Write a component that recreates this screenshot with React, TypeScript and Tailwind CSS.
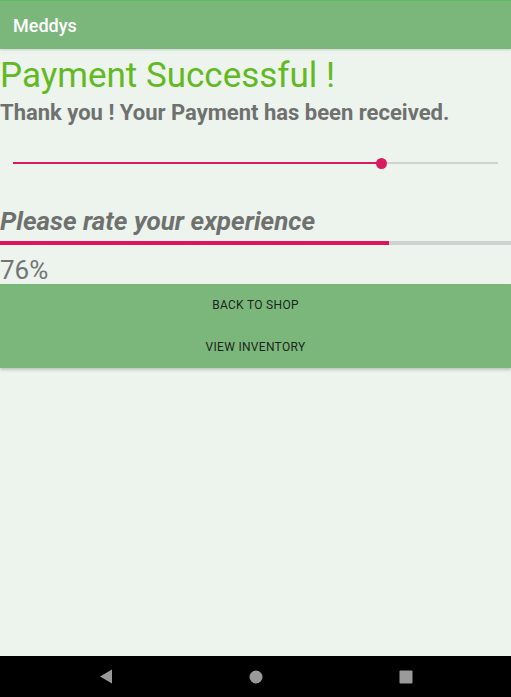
import React from "react";

export default function App() {
  return (
    <div
      className="w-[511px] h-[697px] flex flex-col bg-[#edf4ee] overflow-hidden"
      style={{ fontFamily: "Roboto, 'Liberation Sans', sans-serif" }}
    >
      <div className="h-[1px] bg-[#5cc160]" />
      <div className="h-[48px] bg-[#7bb77b] flex items-center px-[13px] shadow-[0_1px_2px_rgba(0,0,0,0.15)]">
        <span className="text-white text-[18px] font-medium leading-none mt-[1px]">Meddys</span>
      </div>
      <div className="flex-1 flex flex-col">
        <div className="text-[35px] leading-[41px] text-[#63b922] mt-[6px] whitespace-nowrap">Payment Successful !</div>
        <div className="text-[22px] leading-[26px] font-bold text-[#6f716f] mt-[4px] whitespace-nowrap">
          Thank you ! Your Payment has been received.
        </div>
        <div className="mt-[23px] px-[13px] h-[28px] flex items-center">
          <div className="relative w-full h-[2px] bg-[#cfd3cf]">
            <div className="absolute left-0 top-0 h-[2px] w-[368px] bg-[#d81b60]" />
            <div className="absolute left-[363px] top-[-4.5px] w-[11px] h-[11px] rounded-full bg-[#d81b60]" />
          </div>
        </div>
        <div className="mt-[29px] text-[26px] leading-[30px] font-bold italic text-[#6f716f] whitespace-nowrap">
          Please rate your experience
        </div>
        <div className="mt-[5px] h-[4px] w-full bg-[#cfd3cf] flex">
          <div className="h-full w-[389px] bg-[#e0145e]" />
        </div>
        <div className="mt-[12px] text-[26px] leading-[27px] text-[#737573]">76%</div>
        <div className="bg-[#7bb77b] flex flex-col shadow-[0_2px_3px_rgba(0,0,0,0.2)]">
          <div className="h-[42px] flex items-center justify-center text-[12px] font-normal text-[#1c261c] tracking-[0.3px]">
            BACK TO SHOP
          </div>
          <div className="h-[42px] flex items-center justify-center text-[12px] font-normal text-[#1c261c] tracking-[0.3px]">
            VIEW INVENTORY
          </div>
        </div>
      </div>
      <div className="h-[41px] bg-black flex items-center justify-center gap-[136px]">
        <svg width="14" height="15" viewBox="0 0 14 15">
          <path d="M13 0.5 L13 14.5 L1 7.5 Z" fill="#9a9a9a" />
        </svg>
        <svg width="14" height="14" viewBox="0 0 14 14">
          <circle cx="7" cy="7" r="6.5" fill="#9a9a9a" />
        </svg>
        <svg width="14" height="14" viewBox="0 0 14 14">
          <rect x="0.5" y="0.5" width="13" height="13" rx="1" fill="#9a9a9a" />
        </svg>
      </div>
    </div>
  );
}
